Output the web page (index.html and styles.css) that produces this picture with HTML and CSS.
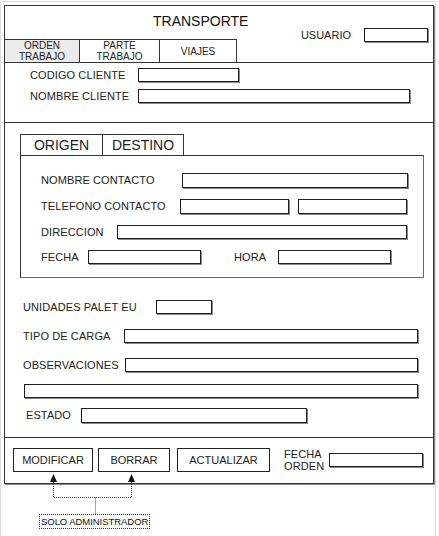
FILE: index.html
```html
<!DOCTYPE html>
<html lang="es">

<head>
    <meta charset="UTF-8">
    <meta name="viewport" content="width=device-width, initial-scale=1.0">
    <title>Transporte</title>
    <link rel="stylesheet" href="styles.css">
</head>

<body>
    <div class="page">
        <div class="frame">
            <header class="header">
                <div class="header-main">
                    <h1 class="title">TRANSPORTE</h1>
                    <nav class="tabs">
                        <span class="tab tab-orden active">ORDEN<br>TRABAJO</span>
                        <span class="tab tab-parte">PARTE<br>TRABAJO</span>
                        <span class="tab tab-viajes">VIAJES</span>
                    </nav>
                </div>
                <div class="user">
                    <label class="user-label">USUARIO</label>
                    <input type="text" class="field w-user">
                </div>
            </header>

            <section class="client">
                <div class="row">
                    <label class="lbl lbl-client">CODIGO CLIENTE</label>
                    <input type="text" class="field w-codigo">
                </div>
                <div class="row">
                    <label class="lbl lbl-client">NOMBRE CLIENTE</label>
                    <input type="text" class="field w-nombre">
                </div>
            </section>

            <section class="main">
                <div class="subtabs">
                    <span class="subtab subtab-origen">ORIGEN</span>
                    <span class="subtab subtab-destino">DESTINO</span>
                </div>
                <div class="panel">
                    <div class="row">
                        <label class="lbl lbl-contacto">NOMBRE CONTACTO</label>
                        <input type="text" class="field tall w-contacto">
                    </div>
                    <div class="row">
                        <label class="lbl lbl-telefono">TELEFONO CONTACTO</label>
                        <input type="text" class="field tall w-tel">
                        <input type="text" class="field tall w-tel tel-second">
                    </div>
                    <div class="row">
                        <label class="lbl lbl-direccion">DIRECCION</label>
                        <input type="text" class="field w-dir">
                    </div>
                    <div class="row">
                        <label class="lbl lbl-fecha">FECHA</label>
                        <input type="text" class="field w-fecha">
                        <label class="lbl lbl-hora">HORA</label>
                        <input type="text" class="field w-hora">
                    </div>
                </div>

                <div class="lower">
                    <div class="lower-group">
                        <div class="row">
                            <label class="lbl lbl-unidades">UNIDADES PALET EU</label>
                            <input type="text" class="field w-unidades">
                        </div>
                        <div class="row">
                            <label class="lbl lbl-tipo">TIPO DE CARGA</label>
                            <input type="text" class="field w-tipo">
                        </div>
                        <div class="row">
                            <label class="lbl lbl-obs">OBSERVACIONES</label>
                            <input type="text" class="field w-obs">
                        </div>
                    </div>
                    <div class="lower-group lower-end">
                        <div class="row">
                            <input type="text" class="field w-full">
                        </div>
                        <div class="row">
                            <label class="lbl lbl-estado">ESTADO</label>
                            <input type="text" class="field tall w-estado">
                        </div>
                    </div>
                </div>
            </section>

            <footer class="actions">
                <button class="btn btn-modificar">MODIFICAR</button>
                <button class="btn btn-borrar">BORRAR</button>
                <button class="btn btn-actualizar">ACTUALIZAR</button>
                <label class="lbl lbl-orden">FECHA<br>ORDEN</label>
                <input type="text" class="field w-orden">
            </footer>
        </div>

        <div class="note">SOLO ADMINISTRADOR</div>
    </div>

    <!-- flechas de la nota -->
    <svg class="connectors" width="439" height="536" viewBox="0 0 439 536">
        <path d="M53.5 482 V497.5 H131.5 V482 M95.5 497.5 V514" fill="none" stroke="#444" stroke-dasharray="1 1"/>
        <polygon points="53.5,474 50,482 57,482" fill="#111"/>
        <polygon points="131.5,474 128,482 135,482" fill="#111"/>
    </svg>
</body>

</html>
```

FILE: styles.css
```css
body {
    margin: 0;
    position: relative;
    font-family: 'Liberation Sans', Arial, sans-serif;
    color: #222;
    background: #fff;
}

.page {
    width: 434px;
    height: 534px;
    margin-top: 1px;
    border: 1px solid #dcdcdc;
    border-bottom: none;
}

.frame {
    box-sizing: border-box;
    width: 430px;
    height: 479px;
    margin: 3px 0 0 3px;
    border: 1px solid #333;
    box-shadow: 1px 1px 0 #8a8a8a;
}

/* cabecera */
.header {
    display: flex;
    justify-content: space-between;
    height: 56px;
    border-bottom: 1px solid #333;
}

.header-main {
    width: 232px;
    display: flex;
    flex-direction: column;
}

.title {
    margin: 0;
    padding: 7px 0 0 148px;
    font-size: 14px;
    line-height: 16px;
    font-weight: normal;
    color: #111;
}

.tabs {
    display: flex;
    margin-top: auto;
    height: 22px;
    border-top: 1px solid #333;
}

.tab {
    display: flex;
    align-items: center;
    justify-content: center;
    text-align: center;
    font-size: 10px;
    line-height: 11px;
    border-right: 1px solid #333;
}

.tab-orden { width: 74px; }
.tab-parte { width: 79px; }
.tab-viajes { width: 76px; }

.tab.active {
    background-color: #ececec;
}

.user {
    display: flex;
    align-items: center;
    margin: 21px 5px 0 0;
    height: 15px;
}

.user-label {
    font-size: 11px;
    margin-right: 13px;
}

/* campos */
.field {
    display: block;
    flex: none;
    box-sizing: border-box;
    height: 14px;
    margin: 0;
    padding: 0;
    border: 1px solid #1e1e1e;
    box-shadow: 1px 1px 0 #8a8a8a;
    background: #fff;
    font: inherit;
}

.field.tall { height: 15px; }

.w-user { width: 64px; }
.w-codigo { width: 101px; }
.w-nombre { width: 272px; }
.w-contacto { width: 226px; }
.w-tel { width: 109px; }
.w-dir { width: 290px; }
.w-fecha { width: 113px; }
.w-hora { width: 113px; }
.w-unidades { width: 56px; }
.w-tipo { width: 294px; }
.w-obs { width: 293px; }
.w-full { width: 394px; margin-left: 1px; }
.w-estado { width: 226px; }
.w-orden { width: 94px; }

.tel-second { margin-left: 9px; }

.row {
    display: flex;
    align-items: center;
}

.lbl {
    flex: none;
    font-size: 11px;
    line-height: 13px;
    letter-spacing: 0.1px;
}

.lbl-client { width: 108px; }
.lbl-contacto { width: 141px; }
.lbl-telefono { width: 139px; }
.lbl-direccion { width: 76px; }
.lbl-fecha { width: 47px; }
.lbl-hora { width: 44px; margin-left: 33px; }
.lbl-unidades { width: 133px; }
.lbl-tipo { width: 101px; }
.lbl-obs { width: 102px; }
.lbl-estado { width: 55px; margin-left: 3px; }

/* cliente */
.client {
    display: flex;
    flex-direction: column;
    gap: 7px;
    height: 54px;
    padding: 5px 0 0 25px;
    border-bottom: 1px solid #333;
}

/* origen / destino */
.main {
    height: 303px;
    padding: 11px 0 0 15px;
    border-bottom: 1px solid #333;
}

.subtabs {
    display: flex;
}

.subtab {
    height: 20px;
    line-height: 20px;
    font-size: 14px;
    text-align: center;
    border-top: 1px solid #333;
    border-right: 1px solid #333;
}

.subtab-origen {
    width: 81px;
    border-left: 1px solid #333;
}

.subtab-destino { width: 80px; }

.panel {
    box-sizing: border-box;
    width: 404px;
    display: flex;
    flex-direction: column;
    gap: 11px;
    padding: 17px 0 13px 20px;
    border: 1px solid #333;
    border-right-color: #666;
    border-bottom-color: #666;
}

.lower {
    padding: 22px 0 0 3px;
}

.lower-group {
    display: flex;
    flex-direction: column;
    gap: 15px;
}

.lower-end {
    gap: 10px;
    margin-top: 12px;
}

/* botones */
.actions {
    display: flex;
    align-items: center;
    height: 43px;
    padding: 0 0 2px 8px;
}

.btn {
    box-sizing: border-box;
    height: 24px;
    margin: 0;
    padding: 0;
    border: 1px solid #222;
    background: #fff;
    color: #222;
    font-family: inherit;
    font-size: 11px;
    cursor: pointer;
}

.btn-modificar { width: 80px; }
.btn-borrar { width: 72px; margin-left: 5px; }
.btn-actualizar { width: 93px; margin-left: 7px; }

.lbl-orden {
    margin: 0 5px 0 14px;
    line-height: 12px;
}

/* nota */
.note {
    display: inline-block;
    margin: 30px 0 0 38px;
    padding: 0 1px;
    border: 1px dotted #333;
    font-size: 9.5px;
    line-height: 13px;
    letter-spacing: -0.05px;
    color: #111;
}

.connectors {
    position: absolute;
    top: 0;
    left: 0;
    pointer-events: none;
}
```
